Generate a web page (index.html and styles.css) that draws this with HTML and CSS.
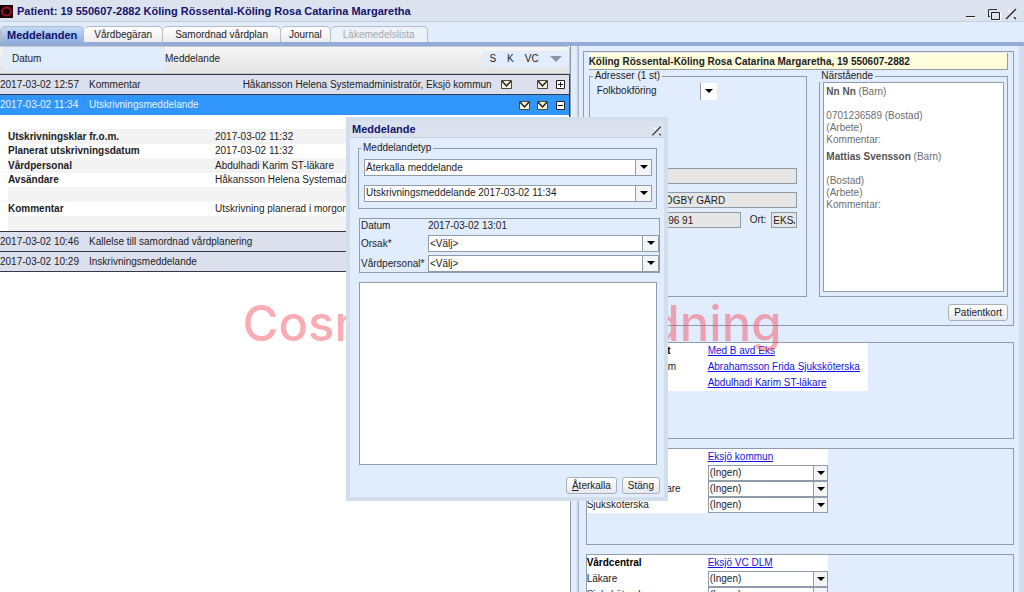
FILE: index.html
```
<!DOCTYPE html>
<html lang="sv">
<head>
<meta charset="utf-8">
<title>Patient</title>
<link rel="stylesheet" href="styles.css">
</head>
<body>
<header class="titlebar">
  <svg class="logo" width="13" height="13" viewBox="0 0 13 13" aria-hidden="true"><rect width="13" height="13" fill="#160306"/><ellipse cx="6.500" cy="6.500" rx="4.600" ry="4" fill="none" stroke="#a3122c" stroke-width="1.800"/></svg>
  <h1>Patient: 19 550607-2882 Köling Rössental-Köling Rosa Catarina Margaretha</h1>
  <div class="window-buttons">
    <button aria-label="Minimera"><svg width="12" height="14" viewBox="0 0 12 14"><path d="M1 9.500H10" stroke="#222"/><path d="M2 10.500H11" stroke="#fff"/></svg></button>
    <button aria-label="Återställ"><svg width="14" height="14" viewBox="0 0 14 14" fill="none"><path d="M5.500 13.500H13M13.500 5V13" stroke="#fff"/><path d="M1.500 9V2.500H10M1 9.500H3" stroke="#333"/><path d="M4.500 5.500H12.500V12.500H4.500Z" stroke="#222"/></svg></button>
    <button aria-label="Stäng fönster"><svg width="13" height="14" viewBox="0 0 13 14"><path d="M3 3L5 5M9 9L11 11" stroke="#fff" stroke-width="1.500"/><path d="M1 12L11 2M9 10L11 12" stroke="#222" stroke-width="1.300"/></svg></button>
  </div>
</header>
<nav class="tabs">
  <button class="tab tab-active">Meddelanden</button>
  <button class="tab">Vårdbegäran</button>
  <button class="tab tab-wide">Samordnad vårdplan</button>
  <button class="tab tab-narrow">Journal</button>
  <button class="tab tab-wide" disabled>Läkemedelslista</button>
</nav>
<main class="workspace">
  <section class="messages">
    <div class="list-head">
      <span class="head-date">Datum</span>
      <span class="head-msg">Meddelande</span>
      <span class="head-flags"><span>S</span><span>K</span><span>VC</span><i class="sort"></i></span>
    </div>
    <div class="list">
      <div class="row">
        <span class="date">2017-03-02 12:57</span><span>Kommentar</span>
        <span class="sender">Håkansson Helena Systemadministratör, Eksjö kommun</span>
        <span class="flags"><svg class="mail" viewBox="0 0 11 9"><path d="M.5 .5H10.500V8.500H.5Z" fill="#f4f1dc" stroke="#4b4a3c"/><path d="M1 1L5.500 6L10 1" fill="none" stroke="#222" stroke-width="1.500"/></svg><i></i><svg class="mail" viewBox="0 0 11 9"><path d="M.5 .5H10.500V8.500H.5Z" fill="#f4f1dc" stroke="#4b4a3c"/><path d="M1 1L5.500 6L10 1" fill="none" stroke="#222" stroke-width="1.500"/></svg><svg class="toggle" viewBox="0 0 9 9"><path d="M.5 .5H8.500V8.500H.5Z" fill="#fff" stroke="#222"/><path d="M2 4.500H7M4.500 2V7" stroke="#111"/></svg></span>
      </div>
      <div class="row row-selected">
        <span class="date">2017-03-02 11:34</span><span>Utskrivningsmeddelande</span>
        <span class="sender"></span>
        <span class="flags"><svg class="mail" viewBox="0 0 11 9"><path d="M.5 .5H10.500V8.500H.5Z" fill="#f4f1dc" stroke="#4b4a3c"/><path d="M1 1L5.500 6L10 1" fill="none" stroke="#222" stroke-width="1.500"/></svg><svg class="mail" viewBox="0 0 11 9"><path d="M.5 .5H10.500V8.500H.5Z" fill="#f4f1dc" stroke="#4b4a3c"/><path d="M1 1L5.500 6L10 1" fill="none" stroke="#222" stroke-width="1.500"/></svg><svg class="toggle" viewBox="0 0 9 9"><path d="M.5 .5H8.500V8.500H.5Z" fill="#fff" stroke="#222"/><path d="M2 4.500H7" stroke="#111"/></svg></span>
      </div>
      <table class="details">
        <tr><th>Utskrivningsklar fr.o.m.</th><td>2017-03-02 11:32</td></tr>
        <tr><th>Planerat utskrivningsdatum</th><td>2017-03-02 11:32</td></tr>
        <tr><th>Vårdpersonal</th><td>Abdulhadi Karim ST-läkare</td></tr>
        <tr><th>Avsändare</th><td>Håkansson Helena Systemadministratör</td></tr>
        <tr><th></th><td></td></tr>
        <tr><th>Kommentar</th><td>Utskrivning planerad i morgon</td></tr>
        <tr><th></th><td></td></tr>
      </table>
      <div class="row"><span class="date">2017-03-02 10:46</span><span>Kallelse till samordnad vårdplanering</span></div>
      <div class="row"><span class="date">2017-03-02 10:29</span><span>Inskrivningsmeddelande</span></div>
    </div>
  </section>
  <div class="splitter"></div>
  <aside class="patient">
    <section class="card">
      <h2>Köling Rössental-Köling Rosa Catarina Margaretha, 19 550607-2882</h2>
      <div class="card-columns">
        <fieldset class="addresses">
          <legend>Adresser (1 st)</legend>
          <div class="address-type"><label for="atype">Folkbokföring</label><button id="atype" class="drop" aria-label="Välj adress"></button></div>
          <div class="address-fields">
            <input class="field" aria-label="C/o" readonly>
            <input class="field" aria-label="Adress" value="HÖGBY GÅRD" readonly>
            <div class="postal"><input class="field zip" aria-label="Postnummer" value="596 91" readonly><label for="ort">Ort:</label><input class="field city" id="ort" value="EKSJÖ" readonly></div>
          </div>
        </fieldset>
        <fieldset class="relatives">
          <legend>Närstående</legend>
          <div class="relatives-list">
            <p><b>Nn Nn</b> (Barn)</p>
            <p class="contact">0701236589 (Bostad)<br>(Arbete)<br>Kommentar:</p>
            <p><b>Mattias Svensson</b> (Barn)</p>
            <p class="contact">(Bostad)<br>(Arbete)<br>Kommentar:</p>
          </div>
        </fieldset>
      </div>
      <button class="btn card-btn">Patientkort</button>
    </section>
    <section class="unit unit-first">
      <div class="unit-rows unit-rows-wide">
        <b>Slutenvårdsenhet</b><a href="#">Med B avd Eks</a>
        <span>Vårdpersonal i team</span><a href="#">Abrahamsson Frida Sjuksköterska</a>
        <span>Läkare</span><a href="#">Abdulhadi Karim ST-läkare</a>
      </div>
    </section>
    <section class="unit">
      <div class="unit-rows">
        <b>Kommun</b><a href="#">Eksjö kommun</a>
        <label for="k1">Kontakt</label><span class="select"><select id="k1"><option>(Ingen)</option></select></span>
        <label for="k2">Biståndshandläggare</label><span class="select"><select id="k2"><option>(Ingen)</option></select></span>
        <label for="k3">Sjuksköterska</label><span class="select"><select id="k3"><option>(Ingen)</option></select></span>
      </div>
    </section>
    <section class="unit">
      <div class="unit-rows">
        <b>Vårdcentral</b><a href="#">Eksjö VC DLM</a>
        <label for="v1">Läkare</label><span class="select"><select id="v1"><option>(Ingen)</option></select></span>
        <label for="v2">Sjuksköterska</label><span class="select"><select id="v2"><option>(Ingen)</option></select></span>
      </div>
    </section>
  </aside>
</main>
<div class="watermark" aria-hidden="true">Cosmic Link Utbildning</div>
<div class="dialog" role="dialog" aria-labelledby="dlg-title">
  <div class="dialog-head"><h2 id="dlg-title">Meddelande</h2><button aria-label="Stäng dialog"><svg width="12" height="12" viewBox="0 0 13 14"><path d="M3 3L5 5M9 9L11 11" stroke="#fff" stroke-width="1.500"/><path d="M1 12L11 2M9 10L11 12" stroke="#222" stroke-width="1.300"/></svg></button></div>
  <div class="dialog-body">
    <fieldset class="type-group">
      <legend>Meddelandetyp</legend>
      <span class="select"><select aria-label="Meddelandetyp"><option>Återkalla meddelande</option></select></span>
      <span class="select"><select aria-label="Meddelande"><option>Utskrivningsmeddelande 2017-03-02 11:34</option></select></span>
    </fieldset>
    <div class="form">
      <span>Datum</span><span>2017-03-02 13:01</span>
      <label for="orsak">Orsak*</label><span class="select"><select id="orsak"><option>&lt;Välj&gt;</option></select></span>
      <label for="vp">Vårdpersonal*</label><span class="select"><select id="vp"><option>&lt;Välj&gt;</option></select></span>
    </div>
    <textarea class="note" aria-label="Text"></textarea>
    <div class="actions"><button class="btn"><u>Å</u>terkalla</button><button class="btn">Stän<u>g</u></button></div>
  </div>
</div>
</body>
</html>
```
FILE: styles.css
```
* { box-sizing: border-box; }
body {
  margin: 0;
  height: 100vh;
  overflow: hidden;
  position: relative;
  display: flex;
  flex-direction: column;
  background: #e1edfd;
  color: #1c1c24;
  font: 10px/12px "Liberation Sans", Arial, sans-serif;
}
h1, h2, p { margin: 0; }
button, input, select, textarea { font: inherit; color: inherit; border-radius: 0; margin: 0; }
fieldset { margin: 0; min-width: 0; border: 1px solid #8f9cab; }
legend { padding: 0 2px; }

.titlebar {
  flex: none;
  display: flex;
  align-items: center;
  gap: 4px;
  height: 22px;
  padding: 1px 6px 0 0;
  background: #dde3ee;
  border-bottom: 1px solid #c3cfe0;
}
.titlebar h1 { flex: 1; font-size: 11px; color: #14146e; white-space: nowrap; }
.window-buttons { display: flex; gap: 10px; padding-top: 6px; }
.window-buttons button, .dialog-head button { padding: 0; border: 0; background: none; display: flex; }
.window-buttons button:last-child { margin-left: -6px; }

.tabs {
  flex: none;
  display: flex;
  align-items: flex-end;
  height: 24px;
  border-bottom: 4px solid #93add8;
}
.tab {
  height: 16px;
  padding: 0 10px;
  border: 1px solid #b5bcc8;
  border-bottom: 0;
  border-left-width: 0;
  border-radius: 5px 5px 0 0;
  background: linear-gradient(#fff, #ececee);
}
.tab-active {
  padding: 0 6px;
  border-left-width: 1px;
  background: linear-gradient(#c3dbf8, #8fb2e2);
  color: #10106a;
  font-size: 11px;
  font-weight: bold;
}
.tab-wide { padding: 0 12px; }
.tab-narrow { padding: 0 8px; }
.tab:disabled { color: #a5a8ae; background: #edf1f8; }

.workspace { flex: 1; min-height: 0; overflow: hidden; display: flex; border-right: 5px solid #d3deed; }
.messages { flex: 0 0 56%; min-width: 0; background: #fff; border-right: 1px solid #8a98aa; }
.list-head {
  display: flex;
  align-items: center;
  height: 28px;
  padding: 0 2px 2px 3px;
  background: linear-gradient(#f6f6f6, #e4e4e4);
  border: 1px solid #c4c8ce;
  border-left: 0;
  border-radius: 0 4px 0 0;
}
.head-date { flex: none; width: 162px; padding: 6px 9px; background: #e1edfd; }
.head-msg { flex: 1; }
.head-flags { display: flex; align-items: center; gap: 11px; padding: 2px 4px 2px 6px; background: #e1edfd; }
.sort { border: 6px solid transparent; border-top-color: #8b93a0; border-bottom: 0; margin-right: 1px; }
.list { border-top: 1px solid #333a44; border-right: 1px solid #333a44; }
.row {
  display: flex;
  align-items: center;
  gap: 9px;
  height: 20px;
  background: #dbe0ec;
  border-bottom: 1px solid #333a44;
}
.date { flex: none; width: 80px; }
.sender { flex: 1; text-align: right; }
.flags { display: flex; align-items: center; gap: 7px; padding-right: 4px; }
.flags i, .mail { width: 11px; height: 9px; }
.toggle { width: 9px; height: 9px; margin-left: 1px; }
.row-selected { background: #3096fb; color: #e8f3ff; border-bottom: 0; }
.details { width: 100%; margin: 14px 0 0; padding-left: 8px; border-spacing: 0; background: #fff; border-bottom: 1px solid #333a44; }
.details th, .details td { height: 14px; padding: 0; font-weight: normal; text-align: left; line-height: 14px; }
.details th { width: 207px; font-weight: bold; }
.details tr:nth-child(odd) { background: #f3f3f4; }
.details tr:nth-child(4n + 1) td { height: 15px; }
.details tr:nth-child(4n + 3) td { height: 15px; }

.splitter { flex: none; width: 8px; background: linear-gradient(90deg, #e1edfd 0 5px, #bccbdf 7px, #e1edfd); border-right: 1px solid #aab8ca; }
.patient { flex: 1; min-width: 0; padding: 5px 5px 0 4px; }
.card { padding: 1px 5px 4px; border: 1px solid #8f9cab; margin-bottom: 16px; }
.card h2 {
  height: 17px;
  font-size: 10px;
  line-height: 17px;
  background: #fdfddc;
  border: solid #8f9cab;
  border-width: 0 1px 1px 0;
  white-space: nowrap;
}
.card-columns { display: grid; grid-template-columns: 218fr 188fr; gap: 12px; }
.addresses { height: 227px; padding: 0 9px 0 7px; }
.addresses legend, .relatives legend { margin-left: -4px; }
.address-type { display: flex; align-items: center; gap: 43px; height: 18px; }
.drop { width: 17px; height: 17px; padding: 0; border: 0; border-left: 1px solid #8f9cab; background: #fff; display: grid; place-items: center; }
.drop::after { content: ""; border: 4px solid transparent; border-top-color: #000; border-bottom: 0; }
.address-fields { display: grid; gap: 8px; padding: 68px 0 0 57px; }
.field { width: 100%; min-width: 0; height: 16px; padding: 0 3px; border: 1px solid #8f9cab; background: #e6e6e6; }
.postal { display: flex; align-items: center; gap: 5px; margin-top: -4px; padding-left: 5px; }
.zip { flex: 1; }
.postal label { padding-left: 4px; }
.city { flex: none; width: 26px; padding: 0 1px; }
.relatives { height: 227px; padding: 0 3px 4px; }
.relatives-list { height: 210px; padding: 3px 2px; background: #fff; border: 1px solid #8f9cab; color: #6e6e6e; }
.relatives-list b { color: #555; }
.contact { padding: 12px 0 5px; }
.btn { height: 17px; padding: 0 5px; border: 1px solid #a9b0ba; border-radius: 3px; background: linear-gradient(#fff, #e6e8ec); }
.card-btn { display: block; margin: 7px 0 0 auto; }

.unit { height: 97px; margin: 0 0 9px 3px; border: 1px solid #8f9cab; overflow: hidden; }
.unit-rows {
  display: grid;
  grid-template-columns: 121px 120px;
  grid-auto-rows: 16px;
  align-items: center;
  width: max-content;
  background: #fff;
}
.unit-rows-wide { grid-template-columns: 121px 160px; }
.unit-rows b { color: #000; }
.unit-rows a { color: #1414e0; }

.select { position: relative; display: block; }
.select select {
  display: block;
  width: 100%;
  height: 16px;
  padding: 0 16px 0 1px;
  border: 1px solid #8f9cab;
  background: #fff;
  appearance: none;
}
.select::before { content: ""; position: absolute; top: 1px; right: 1px; bottom: 1px; width: 13px; background: #f3f4f6; border-left: 1px solid #8f9cab; pointer-events: none; }
.select::after { content: ""; position: absolute; top: 6px; right: 3px; border: 4px solid transparent; border-top-color: #000; border-bottom: 0; pointer-events: none; }

.watermark {
  position: absolute;
  top: 294px;
  left: 0;
  right: 0;
  text-align: center;
  font-family: Inter, "Liberation Sans", sans-serif;
  font-size: 49px;
  font-weight: 500;
  line-height: 60px;
  white-space: nowrap;
  color: rgba(245, 75, 90, .46);
  pointer-events: none;
}

.dialog {
  position: absolute;
  left: 346px;
  top: 117px;
  width: 322px;
  border: 4px solid #d3deed;
  background: #e1edfd;
}
.dialog-head { display: flex; align-items: center; justify-content: space-between; height: 17px; padding: 0 1px 0 2px; background: #dbe2ee; border-bottom: 1px solid #c3cfe0; }
.dialog-head h2 { font-size: 11px; color: #14146e; }
.dialog-head button { padding-top: 4px; }
.dialog-body { padding: 4px 4px 3px 8px; }
.type-group { display: grid; gap: 8px; height: 67px; margin-right: 3px; padding: 5px 4px 6px 5px; }
.type-group legend { margin-left: -3px; }
.type-group select, .form select { height: 17px; }
.type-group .select { height: 17px; }
.type-group .select::before, .form .select::before { width: 15px; }
.type-group .select::after, .form .select::after { right: 4px; }
.form { display: grid; grid-template-columns: 68px 1fr; grid-template-rows: 13px 17px 17px; row-gap: 3px; align-items: center; margin: 9px 0 0 1px; border: 1px solid #8f9cab; }
.form > :nth-child(odd) { padding-left: 1px; }
.note { display: block; width: 298px; height: 183px; margin: 9px 0 12px 1px; border: 1px solid #8f9cab; background: #fff; resize: none; }
.actions { display: flex; justify-content: flex-end; gap: 5px; }
```
